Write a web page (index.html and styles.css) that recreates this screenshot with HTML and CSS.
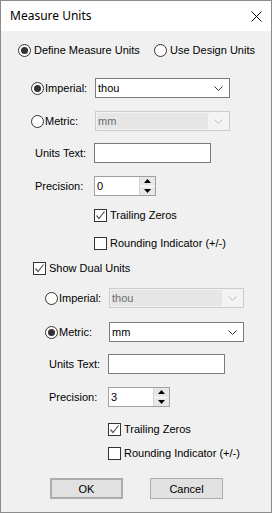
FILE: index.html
```html
<!DOCTYPE html>
<html>
<head>
<meta charset="utf-8">
<link rel="stylesheet" href="styles.css">
</head>
<body>
<div class="window">
  <div class="titlebar">
    <span class="title">Measure Units</span>
    <svg class="close" width="11" height="11" viewBox="0 0 11 11"><path d="M0.5 0.5 L10.5 10.5 M10.5 0.5 L0.5 10.5" stroke="#000" stroke-width="1" fill="none"/></svg>
  </div>
  <div class="content">
    <div class="row row-top">
      <span class="opt opt-define"><span class="radio checked"></span>Define Measure Units</span>
      <span class="opt"><span class="radio"></span>Use Design Units</span>
    </div>

    <div class="row s1r">
      <span class="radio checked"></span><span class="lbl rl">Imperial:</span>
      <div class="combo w135"><span class="ctext">thou</span><svg class="chev" width="9" height="5" viewBox="0 0 9 5"><path d="M0.5 0.5 L4.5 4.5 L8.5 0.5" stroke="#333" fill="none"/></svg></div>
    </div>
    <div class="row s1r">
      <span class="radio"></span><span class="lbl rl">Metric:</span>
      <div class="combo w135 disabled"><span class="ctext">mm</span><span class="carea"><svg class="chev" width="9" height="5" viewBox="0 0 9 5"><path d="M0.5 0.5 L4.5 4.5 L8.5 0.5" stroke="#bcbcbc" fill="none"/></svg></span></div>
    </div>
    <div class="row s1l">
      <span class="lbl pl">Units Text:</span>
      <div class="edit w117"></div>
    </div>
    <div class="row s1l">
      <span class="lbl pl">Precision:</span>
      <div class="spin"><span class="ctext">0</span><span class="spinbtns"><span class="sb"><svg width="7" height="4" viewBox="0 0 7 4"><path d="M3.5 0 L7 4 L0 4 Z" fill="#000"/></svg></span><span class="sb"><svg width="7" height="4" viewBox="0 0 7 4"><path d="M0 0 L7 0 L3.5 4 Z" fill="#000"/></svg></span></span></div>
    </div>
    <div class="row s1c">
      <span class="check checked"><svg width="11" height="11" viewBox="0 0 11 11"><path d="M1.5 5.5 L4 8.5 L9.5 1.5" stroke="#555" stroke-width="1.2" fill="none"/></svg></span>Trailing Zeros
    </div>
    <div class="row s1c">
      <span class="check"></span>Rounding Indicator (+/-)
    </div>

    <div class="row sdual">
      <span class="check checked"><svg width="11" height="11" viewBox="0 0 11 11"><path d="M1.5 5.5 L4 8.5 L9.5 1.5" stroke="#555" stroke-width="1.2" fill="none"/></svg></span>Show Dual Units
    </div>

    <div class="row s2r">
      <span class="radio"></span><span class="lbl rl">Imperial:</span>
      <div class="combo w135 disabled"><span class="ctext">thou</span><span class="carea"><svg class="chev" width="9" height="5" viewBox="0 0 9 5"><path d="M0.5 0.5 L4.5 4.5 L8.5 0.5" stroke="#bcbcbc" fill="none"/></svg></span></div>
    </div>
    <div class="row s2r">
      <span class="radio checked"></span><span class="lbl rl">Metric:</span>
      <div class="combo w135"><span class="ctext">mm</span><svg class="chev" width="9" height="5" viewBox="0 0 9 5"><path d="M0.5 0.5 L4.5 4.5 L8.5 0.5" stroke="#333" fill="none"/></svg></div>
    </div>
    <div class="row s2l">
      <span class="lbl pl">Units Text:</span>
      <div class="edit w117"></div>
    </div>
    <div class="row s2l">
      <span class="lbl pl">Precision:</span>
      <div class="spin"><span class="ctext">3</span><span class="spinbtns"><span class="sb"><svg width="7" height="4" viewBox="0 0 7 4"><path d="M3.5 0 L7 4 L0 4 Z" fill="#000"/></svg></span><span class="sb"><svg width="7" height="4" viewBox="0 0 7 4"><path d="M0 0 L7 0 L3.5 4 Z" fill="#000"/></svg></span></span></div>
    </div>
    <div class="row s2c">
      <span class="check checked"><svg width="11" height="11" viewBox="0 0 11 11"><path d="M1.5 5.5 L4 8.5 L9.5 1.5" stroke="#555" stroke-width="1.2" fill="none"/></svg></span>Trailing Zeros
    </div>
    <div class="row s2c">
      <span class="check"></span>Rounding Indicator (+/-)
    </div>

    <div class="buttons">
      <div class="btn default">OK</div>
      <div class="btn">Cancel</div>
    </div>
  </div>
</div>
</body>
</html>
```

FILE: styles.css
```css
* { box-sizing: border-box; }
html, body { margin: 0; padding: 0; background: #f0f0f0; }
body {
  font-family: "Liberation Sans", Arial, sans-serif;
  font-size: 11px;
  color: #000;
}
.window {
  width: 272px;
  height: 513px;
  border: 1px solid #8c8c8c;
  background: #f0f0f0;
  display: flex;
  flex-direction: column;
}
.titlebar {
  height: 30px;
  background: #fff;
  display: flex;
  align-items: center;
  justify-content: space-between;
  padding: 0 9px 0 9px;
  flex: none;
}
.title {
  font-family: "Noto Sans", sans-serif;
  font-size: 12px;
  color: #000;
  padding-bottom: 1px;
}
.close { margin-top: 0px; }
.content {
  padding-top: 9px;
  display: grid;
  grid-template-rows: 38px 33px 32px 33px 29px 28px 25px 30px 34px 32px 33px 32px 24px 35px 21px;
}
.row {
  display: flex;
  align-items: center;
  height: 20px;
  white-space: nowrap;
}
.row-top { padding-left: 17px; }
.opt { display: flex; align-items: center; }
.opt-define { width: 136px; }
.opt .radio { margin-right: 3px; }

.s1r { padding-left: 30px; }
.s1l { padding-left: 34px; }
.s1c { padding-left: 93px; }
.sdual { padding-left: 32px; }
.s2r { padding-left: 44px; }
.s2l { padding-left: 48px; }
.s2c { padding-left: 107px; }

.radio {
  width: 13px;
  height: 13px;
  border: 1px solid #333;
  border-radius: 50%;
  background: #fff;
  display: inline-flex;
  align-items: center;
  justify-content: center;
  flex: none;
}
.radio.checked::after {
  content: "";
  width: 7px;
  height: 7px;
  border-radius: 50%;
  background: #333;
}
.rl { width: 50px; margin-left: 1px; }
.pl { width: 59px; }
.lbl { flex: none; }

.combo {
  height: 20px;
  border: 1px solid #7a7a7a;
  background: #fff;
  display: flex;
  align-items: center;
  justify-content: space-between;
  padding-left: 2px;
  padding-right: 6px;
}
.w135 { width: 135px; }
.combo.disabled {
  border-color: #cccccc;
  background: #f3f3f3;
  padding: 1px;
  align-items: stretch;
}
.combo.disabled .ctext {
  flex: 1;
  background: #e6e6e6;
  color: #6d6d6d;
  display: flex;
  align-items: center;
  padding-left: 1px;
}
.carea {
  width: 20px;
  display: flex;
  align-items: center;
  justify-content: center;
  padding-left: 1px;
}
.edit {
  height: 20px;
  border: 1px solid #7a7a7a;
  background: #fff;
}
.w117 { width: 117px; }

.spin {
  width: 62px;
  height: 20px;
  border: 1px solid #a0a0a0;
  background: #fff;
  display: flex;
  align-items: center;
  justify-content: space-between;
  padding-left: 2px;
}
.spinbtns {
  width: 16px;
  height: 18px;
  display: flex;
  flex-direction: column;
  border-left: 1px solid #d4d4d4;
}
.sb {
  flex: 1;
  background: #e8e8e8;
  display: flex;
  align-items: center;
  justify-content: center;
}
.sb + .sb { border-top: 1px solid #fff; }

.check {
  width: 13px;
  height: 13px;
  border: 1px solid #333;
  background: #fff;
  margin-right: 3px;
  display: inline-flex;
  align-items: center;
  justify-content: center;
  flex: none;
}

.buttons {
  display: flex;
  padding-left: 49px;
  gap: 27px;
}
.btn {
  width: 73px;
  height: 21px;
  border: 1px solid #adadad;
  background: #e1e1e1;
  display: flex;
  align-items: center;
  justify-content: center;
}
.btn.default { border: 2px solid #adadad; }
```
